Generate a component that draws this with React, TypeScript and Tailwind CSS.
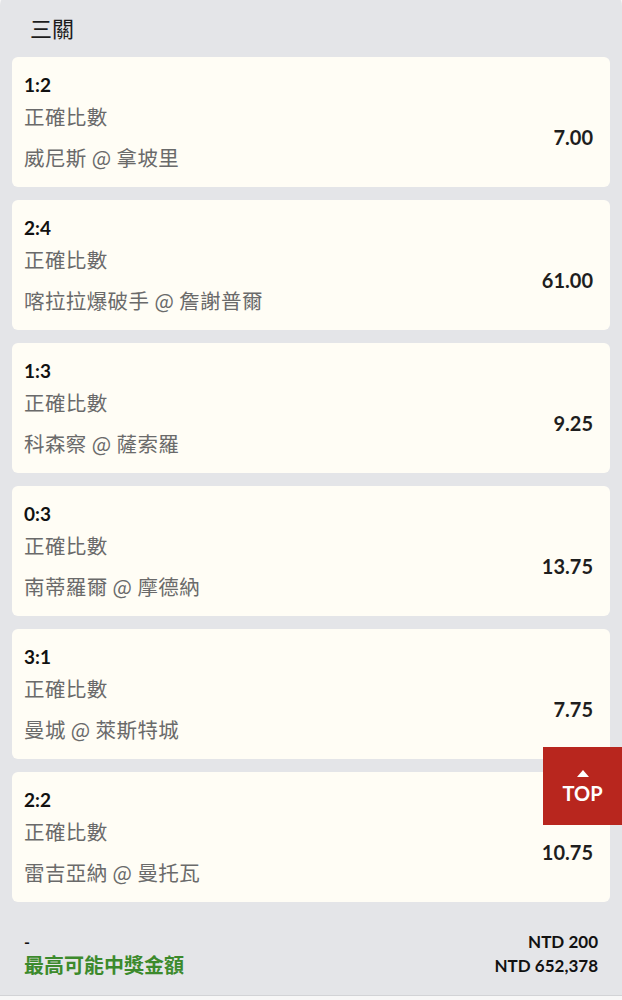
import React from "react";

const bets = [
  { score: "1:2", match: "威尼斯 @ 拿坡里", odds: "7.00" },
  { score: "2:4", match: "喀拉拉爆破手 @ 詹謝普爾", odds: "61.00" },
  { score: "1:3", match: "科森察 @ 薩索羅", odds: "9.25" },
  { score: "0:3", match: "南蒂羅爾 @ 摩德納", odds: "13.75" },
  { score: "3:1", match: "曼城 @ 萊斯特城", odds: "7.75" },
  { score: "2:2", match: "雷吉亞納 @ 曼托瓦", odds: "10.75" },
];

const FONT = '"Lato", "Noto Sans CJK TC", sans-serif';
const CJK = '"Noto Sans CJK TC", sans-serif';

export default function App() {
  return (
    <div className="relative w-[622px] h-[1000px] overflow-hidden bg-[#f7f7f7]" style={{ fontFamily: FONT }}>
      <div className="-mt-[8px] rounded-t-[14px] bg-[#e4e5e8] h-[1004px] border-b border-[#d2d3d6] flex flex-col">
        <div className="h-[65px] pt-[8px] pl-[30px] flex items-center text-[22px] text-[#1c1c1c]">三關</div>
        <div className="flex flex-col gap-[13px] px-[12px]">
          {bets.map((b) => (
            <div key={b.score} className="h-[130px] rounded-[6px] bg-[#fffdf5] flex">
              <div className="flex-1 pl-[12px] pt-[14px] flex flex-col">
                <div className="h-[28px] leading-[28px] text-[19px] font-bold text-[#111]">{b.score}</div>
                <div className="h-[36px] leading-[36px] text-[20.5px] tracking-[0.4px] text-[#6a6a6a]">正確比數</div>
                <div className="h-[44px] leading-[44px] text-[20.5px] tracking-[0.4px] text-[#6a6a6a]" style={{ fontFamily: CJK }}>{b.match}</div>
              </div>
              <div className="pt-[30px] pr-[17px] flex items-center text-[20px] font-bold text-[#1e1e1e]">{b.odds}</div>
            </div>
          ))}
        </div>
        <div className="flex justify-between px-[24px] pt-[28px]">
          <div className="flex flex-col">
            <div className="h-[24px] leading-[24px] text-[16px] font-bold text-[#111]">-</div>
            <div className="h-[22px] leading-[22px] text-[20px] font-bold text-[#3c8a2c]">最高可能中獎金額</div>
          </div>
          <div className="flex flex-col items-end text-[17px] font-bold text-[#111]">
            <div className="h-[24px] leading-[24px]">NTD 200</div>
            <div className="h-[24px] leading-[24px]">NTD 652,378</div>
          </div>
        </div>
      </div>
      <div className="absolute left-[543px] top-[747px] w-[79px] h-[78px] bg-[#b8261e] flex flex-col items-center pt-[23px]">
        <div className="w-0 h-0 border-l-[6px] border-r-[6px] border-b-[7px] border-l-transparent border-r-transparent border-b-white" />
        <div className="text-white font-bold text-[20px] leading-[24px] mt-[4px]">TOP</div>
      </div>
    </div>
  );
}
